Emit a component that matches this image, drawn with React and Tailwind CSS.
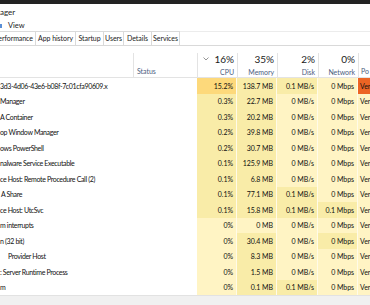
const L = "bg-[#fff4c4]";
const M = "bg-[#f9eca8]";
const H = "bg-[#fdd97b]";

const rows = [
  { name: "3d3-4d06-43e6-b08f-7c01cfa90609.x", pad: 0, cpu: ["15.2%", H], mem: ["138.7 MB", M], disk: ["0.1 MB/s", M], net: ["0 Mbps", L], hot: true },
  { name: "Manager", pad: 0, cpu: ["0.3%", M], mem: ["22.7 MB", M], disk: ["0 MB/s", L], net: ["0 Mbps", L] },
  { name: "A Container", pad: 0, cpu: ["0.3%", M], mem: ["20.2 MB", M], disk: ["0 MB/s", L], net: ["0 Mbps", L] },
  { name: "op Window Manager", pad: 0, cpu: ["0.2%", M], mem: ["39.8 MB", M], disk: ["0 MB/s", L], net: ["0 Mbps", L] },
  { name: "ows PowerShell", pad: 0, cpu: ["0.2%", M], mem: ["30.7 MB", M], disk: ["0 MB/s", L], net: ["0 Mbps", L] },
  { name: "nalware Service Executable", pad: 0, cpu: ["0.1%", M], mem: ["125.9 MB", M], disk: ["0 MB/s", L], net: ["0 Mbps", L] },
  { name: "ce Host: Remote Procedure Call (2)", pad: 0, cpu: ["0.1%", M], mem: ["6.8 MB", M], disk: ["0 MB/s", L], net: ["0 Mbps", L] },
  { name: "A Share", pad: 1, cpu: ["0.1%", M], mem: ["77.1 MB", M], disk: ["0.1 MB/s", M], net: ["0 Mbps", L] },
  { name: "ce Host: UtcSvc", pad: 0, cpu: ["0.1%", M], mem: ["15.8 MB", M], disk: ["0.1 MB/s", M], net: ["0.1 Mbps", M] },
  { name: "m interrupts", pad: 0, cpu: ["0%", L], mem: ["0 MB", L], disk: ["0 MB/s", L], net: ["0 Mbps", L] },
  { name: "n (32 bit)", pad: 0, cpu: ["0%", L], mem: ["30.4 MB", M], disk: ["0 MB/s", L], net: ["0 Mbps", M] },
  { name: "Provider Host", pad: 8, cpu: ["0%", L], mem: ["8.3 MB", M], disk: ["0 MB/s", L], net: ["0 Mbps", L] },
  { name: ": Server Runtime Process", pad: 0, cpu: ["0%", L], mem: ["1.5 MB", M], disk: ["0 MB/s", L], net: ["0 Mbps", L] },
  { name: "m", pad: 0, cpu: ["0%", L], mem: ["0.1 MB", M], disk: ["0.1 MB/s", M], net: ["0 Mbps", L] },
];

const tabs = [
  ["erformance", "w-[36px] justify-end pr-[2px]"],
  ["App history", "w-[40px] justify-center"],
  ["Startup", "w-[28px] justify-center"],
  ["Users", "w-[20px] justify-center"],
  ["Details", "w-[28px] justify-center"],
  ["Services", "w-[28px] justify-center"],
];

function Cell({ v, w }) {
  return (
    <div className={`${w} ${v[1]} h-full flex items-center justify-end pr-[3px] border-r border-[#fffbe8]`}>
      {v[0]}
    </div>
  );
}

function HeadCol({ pct, label, w, chevron }) {
  return (
    <div className={`${w} h-[25px] border-l border-[#e3e3e3] flex flex-col items-end pr-[3px] relative`}>
      {chevron && (
        <svg className="absolute left-[5px] top-[4px]" width="6" height="4" viewBox="0 0 6 4">
          <path d="M0.5 0.5 L3 3 L5.5 0.5" fill="none" stroke="#8a8a8a" strokeWidth="0.9" />
        </svg>
      )}
      <div className="text-[10px] leading-[12px] text-[#1a1a1a]">{pct}</div>
      <div className="text-[7px] leading-[10px] text-[#4d6080] mt-[2px]">{label}</div>
    </div>
  );
}

export default function App() {
  return (
    <div className="w-[370px] h-[305px] overflow-hidden bg-white flex flex-col text-[7px] tracking-[-0.05px] text-[#111]" style={{ fontFamily: "Lato, 'Noto Sans', sans-serif" }}>
      <div className="h-[4px] bg-[#232323] shrink-0" />
      <div className="h-[16px] shrink-0 flex items-center text-[8px] text-[#222]">ager</div>
      <div className="h-[11px] shrink-0 flex items-center text-[7.5px] text-[#222]">
        <span className="w-[2px] h-[4px] bg-[#5b8fd6] mr-[6px]" />
        <span>View</span>
      </div>
      <div className="h-[15px] shrink-0 flex border-b border-[#d9d9d9]">
        {tabs.map(([t, w]) => (
          <div key={t} className={`${w} h-full border-r border-t border-[#dadada] flex items-center whitespace-nowrap overflow-hidden text-[#222]`}>
            {t}
          </div>
        ))}
        <div className="flex-1 border-t border-[#ececec]" />
      </div>
      <div className="h-[32px] shrink-0 pt-[7px] flex border-b border-[#e3e3e3]">
        <div className="w-[133px]" />
        <div className="w-[64px] h-[25px] border-l border-[#e3e3e3] flex items-end pl-[3px] pb-[2px] text-[#4d6080]">Status</div>
        <HeadCol pct="16%" label="CPU" w="w-[40px]" chevron />
        <HeadCol pct="35%" label="Memory" w="w-[40px]" />
        <HeadCol pct="2%" label="Disk" w="w-[41px]" />
        <HeadCol pct="0%" label="Network" w="w-[40px]" />
        <div className="flex-1 h-[25px] border-l border-[#e3e3e3] flex items-end pl-[2px] pb-[2px] text-[#4d6080]">Po</div>
      </div>
      <div className="flex flex-col">
        {rows.map((r, i) => (
          <div key={i} className="h-[15.5px] flex items-center whitespace-nowrap">
            <div className="w-[133px] h-full flex items-center overflow-hidden tracking-[-0.35px]" style={{ paddingLeft: r.pad }}>
              {r.name}
            </div>
            <div className="w-[64px] h-full" />
            <Cell v={r.cpu} w="w-[40px]" />
            <Cell v={r.mem} w="w-[40px]" />
            <Cell v={r.disk} w="w-[41px]" />
            <Cell v={r.net} w="w-[40px]" />
            <div className={`flex-1 h-full flex items-center pl-[2px] overflow-hidden ${r.hot ? "bg-[#ec6424]" : L}`}>Ver</div>
          </div>
        ))}
      </div>
      <div className="flex-1 bg-[#f0f0f0] border-t border-[#e2e2e2]" />
    </div>
  );
}
